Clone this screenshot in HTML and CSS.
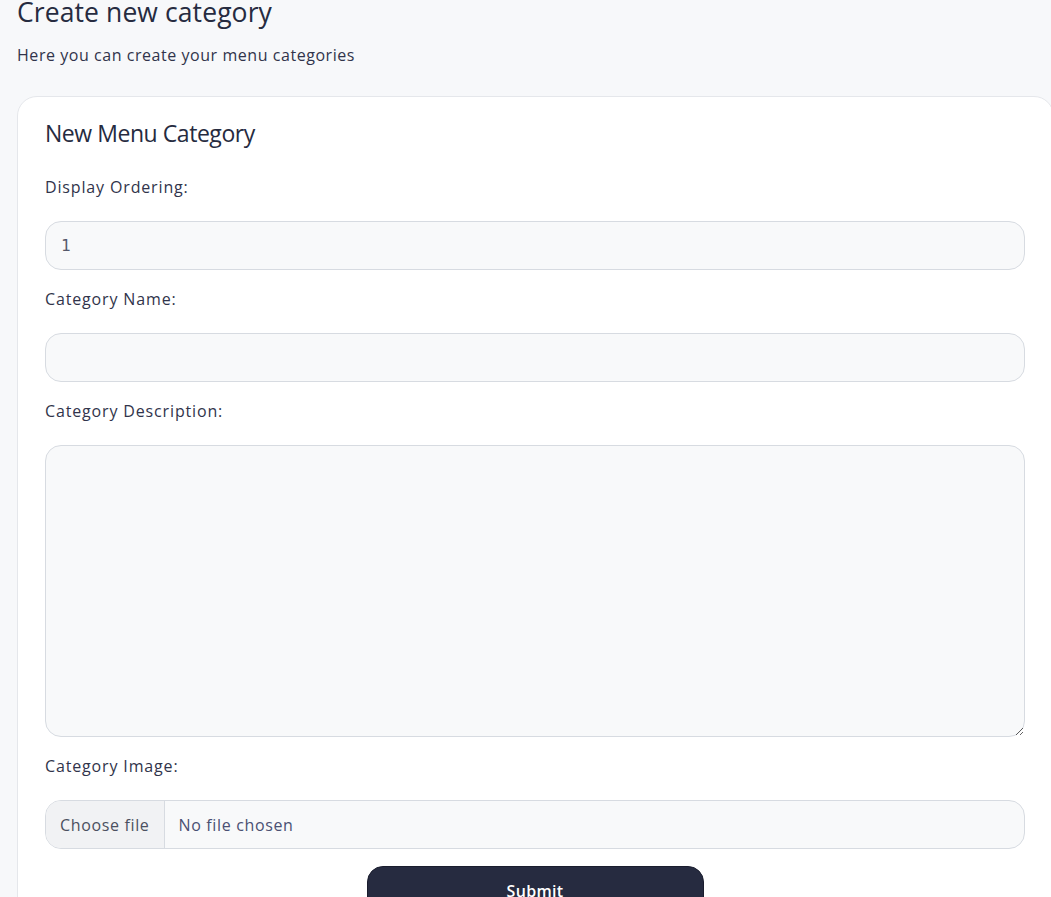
FILE: index.html
```html
<!DOCTYPE html>
<html lang="en">
<head>
<meta charset="utf-8">
<title>Create new category</title>
<link rel="stylesheet" href="styles.css">
</head>
<body>
<main class="page">
  <header class="page-header">
    <h1 class="page-title">Create new category</h1>
    <p class="page-subtitle">Here you can create your menu categories</p>
  </header>
  <section class="card">
    <h2 class="card-title">New Menu Category</h2>
    <form class="form">
      <div class="group">
        <label class="label" for="order">Display Ordering:</label>
        <input class="control control-number" id="order" type="text" value="1">
      </div>
      <div class="group">
        <label class="label" for="name">Category Name:</label>
        <input class="control" id="name" type="text">
      </div>
      <div class="group">
        <label class="label" for="desc">Category Description:</label>
        <textarea class="control control-area" id="desc"></textarea>
      </div>
      <div class="group">
        <span class="label">Category Image:</span>
        <div class="file">
          <span class="file-btn">Choose file</span>
          <span class="file-name">No file chosen</span>
        </div>
      </div>
      <div class="actions">
        <button class="btn" type="button">Submit</button>
      </div>
    </form>
  </section>
</main>
</body>
</html>
```
FILE: styles.css
```css
* { box-sizing: border-box; }
html, body { margin: 0; padding: 0; }
body {
  background: #f7f8fa;
  font-family: "Open Sans", "Noto Sans", sans-serif;
  color: #262b40;
  overflow: hidden;
}
.page {
  padding: 0 0 0 17px;
}
.page-title {
  margin: -5px 0 0;
  font-size: 26.5px;
  font-weight: 400;
  line-height: 34px;
  letter-spacing: 0.1px;
  color: #262b40;
}
.page-subtitle {
  margin: 14px 0 0;
  font-size: 16px;
  line-height: 24px;
  letter-spacing: 0.55px;
  color: #31344b;
}
.card {
  margin: 29px -3px 0 0;
  background: #ffffff;
  border: 1px solid #e5e7eb;
  border-radius: 20px;
  padding: 20px 28px 0 27px;
}
.card-title {
  margin: 0 0 26px;
  font-size: 23px;
  font-weight: 500;
  line-height: 32px;
  letter-spacing: -0.45px;
  color: #262b40;
}
.group {
  margin-bottom: 17px;
}
.label {
  display: block;
  font-size: 16px;
  font-weight: 500;
  line-height: 24px;
  letter-spacing: 0.85px;
  margin-bottom: 22px;
  color: #31344b;
}
.control {
  display: block;
  width: 100%;
  height: 49px;
  border: 1px solid #d7dbe1;
  border-radius: 16px;
  background: #f8f9fa;
  padding: 0 15px;
  font-family: "Open Sans", sans-serif;
  font-size: 16px;
  color: #4a5073;
  outline: none;
}
.control-number {
  font-family: "DejaVu Sans Mono", monospace;
  font-size: 16px;
  color: #55586a;
}
.control-area {
  height: 292px;
  resize: vertical;
  padding: 12px 15px;
}
.file {
  display: flex;
  height: 49px;
  border: 1px solid #d7dbe1;
  border-radius: 16px;
  background: #f8f9fa;
  overflow: hidden;
  font-size: 16px;
  letter-spacing: 0.65px;
  color: #4a5073;
}
.file-btn {
  display: flex;
  align-items: center;
  padding: 0 14px;
  background: #f1f2f4;
  border-right: 1px solid #d7dbe1;
  color: #4b5060;
}
.file-name {
  display: flex;
  align-items: center;
  padding-left: 14px;
}
.actions {
  display: flex;
  justify-content: center;
  margin-top: 1px;
}
.btn {
  width: 337px;
  height: 50px;
  border: 1px solid #1a1d2e;
  border-radius: 16px;
  background: #262b40;
  color: #ffffff;
  font-family: "Open Sans", sans-serif;
  font-size: 16px;
  font-weight: 600;
  letter-spacing: 0.3px;
}
```
